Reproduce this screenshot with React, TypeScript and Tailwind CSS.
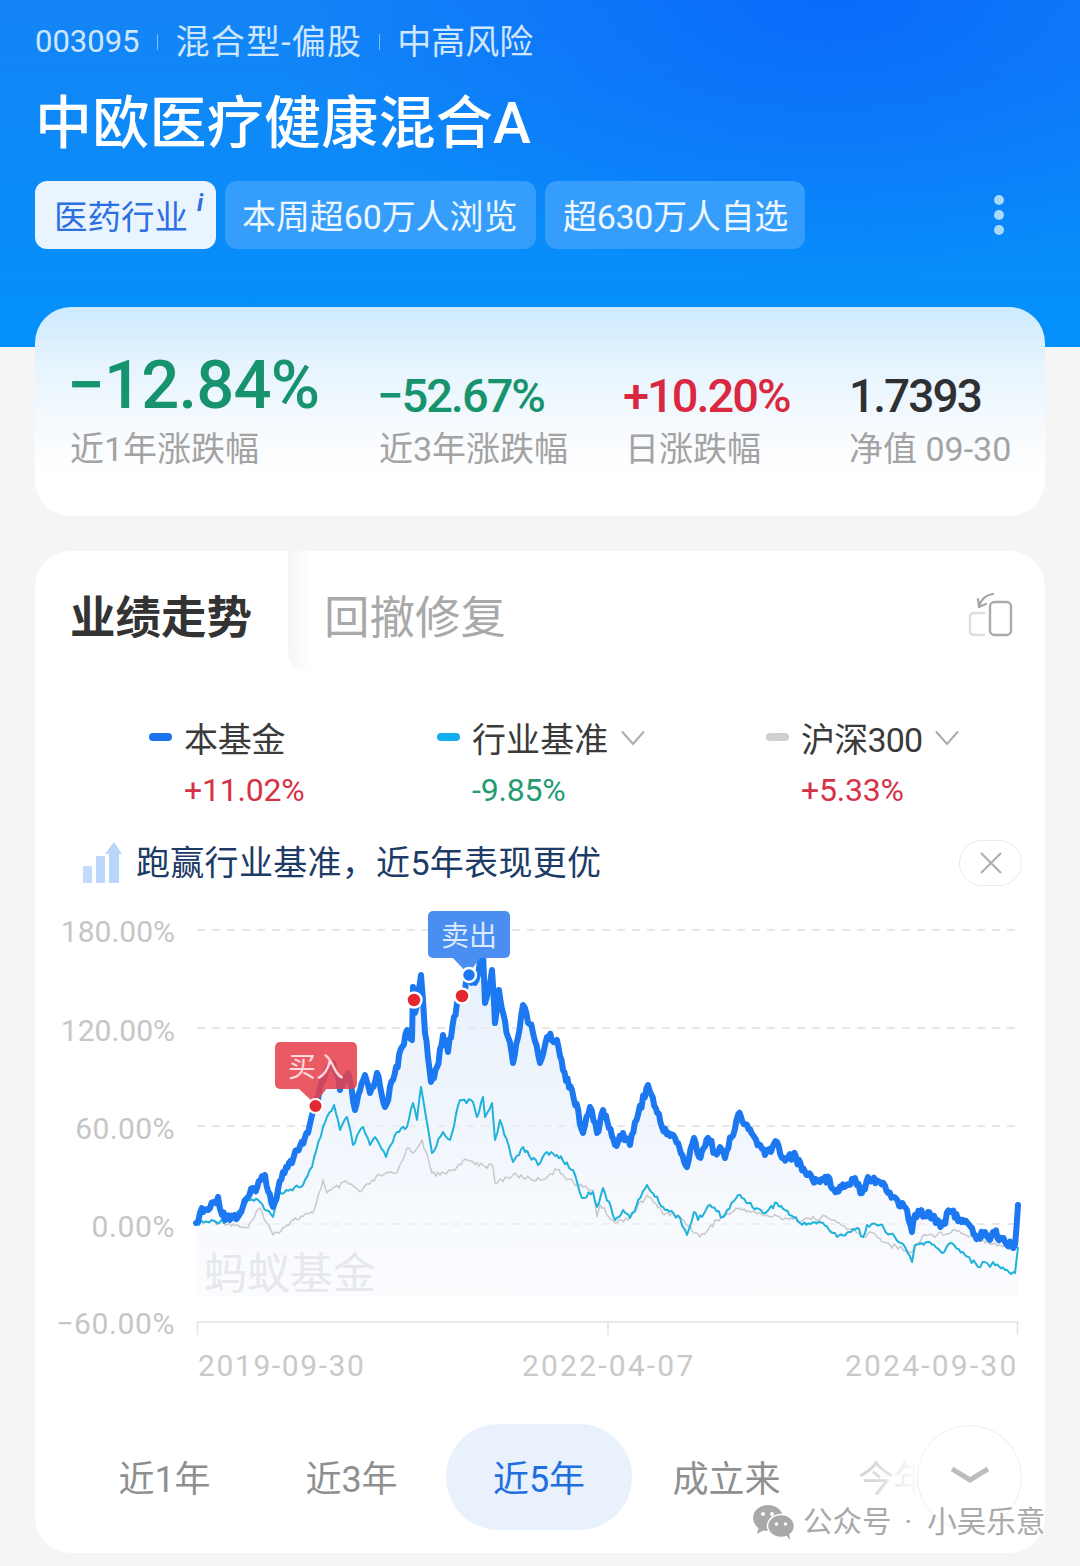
type Pt = [number, number];

const BLUE: Pt[] = [[196,1223],[200,1213],[210,1208],[218,1197],[222,1215],[238,1217],[248,1197],[265,1175],[273,1207],[283,1172],[292,1163],[297,1150],[308,1133],[315,1107],[327,1070],[333,1063],[340,1090],[348,1073],[355,1110],[365,1075],[370,1093],[377,1073],[385,1107],[393,1080],[407,1030],[412,1040],[413,987],[415,1013],[421,975],[425,1033],[431,1082],[437,1067],[443,1035],[448,1052],[457,1003],[463,997],[468,977],[475,983],[483,953],[485,1003],[492,970],[495,1023],[499,990],[508,1037],[513,1063],[523,1005],[533,1033],[540,1063],[547,1037],[557,1040],[563,1070],[572,1090],[583,1133],[590,1107],[597,1133],[603,1110],[615,1145],[623,1133],[630,1145],[635,1122],[648,1085],[662,1127],[675,1138],[687,1167],[694,1138],[699,1157],[708,1138],[715,1152],[720,1147],[725,1158],[738,1115],[753,1135],[765,1155],[777,1142],[782,1158],[793,1155],[808,1175],[820,1182],[825,1177],[837,1190],[855,1178],[862,1193],[868,1177],[880,1182],[893,1197],[907,1210],[912,1232],[915,1215],[928,1212],[942,1225],[950,1212],[963,1220],[978,1238],[985,1232],[990,1240],[993,1232],[1005,1242],[1015,1245],[1018,1205]];

const TEAL: Pt[] = [[197,1223],[230,1220],[250,1200],[260,1202],[273,1217],[280,1192],[303,1185],[312,1167],[323,1127],[327,1117],[334,1105],[340,1130],[347,1117],[353,1145],[363,1127],[370,1145],[375,1137],[386,1157],[397,1132],[407,1127],[413,1103],[417,1120],[421,1087],[432,1153],[443,1132],[450,1140],[460,1100],[473,1102],[477,1117],[483,1097],[485,1117],[492,1103],[495,1140],[500,1120],[513,1162],[523,1147],[538,1165],[547,1152],[557,1155],[573,1170],[582,1198],[593,1192],[597,1207],[603,1188],[615,1220],[623,1210],[630,1218],[647,1185],[663,1207],[680,1218],[687,1235],[694,1212],[698,1220],[710,1205],[723,1217],[738,1195],[763,1213],[777,1203],[800,1223],[823,1223],[837,1237],[857,1228],[863,1237],[867,1225],[880,1225],[905,1247],[912,1262],[915,1245],[928,1242],[942,1253],[950,1243],[963,1252],[978,1267],[985,1262],[990,1267],[993,1262],[1005,1270],[1015,1273],[1018,1247]];

const GREY: Pt[] = [[197,1222],[223,1222],[248,1228],[260,1208],[273,1235],[293,1220],[313,1213],[323,1180],[327,1193],[347,1182],[360,1192],[380,1175],[397,1173],[407,1148],[413,1153],[422,1140],[432,1173],[440,1175],[457,1167],[467,1160],[483,1165],[493,1167],[495,1183],[513,1175],[540,1180],[557,1170],[577,1185],[593,1190],[597,1217],[600,1205],[615,1223],[630,1217],[647,1195],[662,1212],[680,1217],[700,1237],[717,1220],[740,1208],[763,1215],[803,1220],[827,1217],[863,1237],[870,1232],[890,1245],[912,1252],[923,1235],[937,1235],[955,1230],[977,1238],[1015,1250],[1018,1240]];

// adds the small day-to-day wobble between the hand-read points
function wobble(points: Pt[], amp: number, step = 2): Pt[] {
  const out: Pt[] = [];
  let n = 0;
  points.forEach((p, i) => {
    out.push(p);
    const next = points[i + 1];
    if (!next) return;
    const steps = Math.floor((next[0] - p[0]) / step);
    for (let s = 1; s < steps; s++) {
      n += 1;
      const r = Math.sin(n * 12.9898) * 43758.5453;
      const j = (r - Math.floor(r) - 0.5) * amp;
      const t = s / steps;
      out.push([p[0] + (next[0] - p[0]) * t, p[1] + (next[1] - p[1]) * t + j]);
    }
  });
  return out;
}

const toLine = (pts: Pt[]) => pts.map((p) => `${p[0].toFixed(1)},${p[1].toFixed(1)}`).join(" ");

const blueLine = wobble(BLUE, 9, 1.5);
const areaPath = `M197,1296 L${blueLine.map((p) => `${p[0].toFixed(1)},${p[1].toFixed(1)}`).join(" L")} L1018,1296 Z`;

const GRID = [930, 1028, 1126, 1224];
const Y_LABELS: [string, number, number][] = [
  ["180.00%", 942, 0],
  ["120.00%", 1041, 0],
  ["60.00%", 1139, 0.4],
  ["0.00%", 1237, 0.6],
  ["−60.00%", 1334, 0.6],
];

function Chart() {
  return (
    <svg viewBox="35 900 1010 500" className="block w-[1010px] h-[500px]">
      <defs>
        <linearGradient id="area" x1="0" y1="950" x2="0" y2="1296" gradientUnits="userSpaceOnUse">
          <stop offset="0" stopColor="#e6f0fb" />
          <stop offset="0.6" stopColor="#f3f7fd" />
          <stop offset="1" stopColor="#fbfcfe" />
        </linearGradient>
      </defs>
      {GRID.map((y) => (
        <line key={y} x1="197" x2="1018" y1={y} y2={y} stroke="#e6e6e6" strokeWidth="1.5" strokeDasharray="8 7" />
      ))}
      <path d="M197.5,1335 V1322 H1017.5 V1335 M608,1322 V1335" fill="none" stroke="#e2e2e2" strokeWidth="1.5" />
      <path d={areaPath} fill="url(#area)" />
      {GRID.map((y) => (
        <line key={y} x1="197" x2="1018" y1={y} y2={y} stroke="#e2e2e2" strokeOpacity="0.6" strokeWidth="1.5" strokeDasharray="8 7" />
      ))}
      <text x="204" y="1289" fontSize="43" fill="#e6e8eb">蚂蚁基金</text>
      <polyline points={toLine(wobble(GREY, 5))} fill="none" stroke="#c9c9cc" strokeWidth="1.5" strokeLinejoin="round" />
      <polyline points={toLine(wobble(TEAL, 5))} fill="none" stroke="#1fb2da" strokeWidth="2" strokeLinejoin="round" />
      <polyline points={toLine(blueLine)} fill="none" stroke="#1b78f0" strokeWidth="6" strokeLinejoin="round" strokeLinecap="round" />

      {Y_LABELS.map(([label, y, spacing]) => (
        <text key={label} x="175" y={y} textAnchor="end" fontSize="30" letterSpacing={spacing} fill="#c6c6c6">{label}</text>
      ))}
      <text x="198" y="1376" fontSize="30" letterSpacing="1.6" fill="#c9c9c9">2019-09-30</text>
      <text x="522" y="1376" fontSize="30" letterSpacing="2.2" fill="#c9c9c9">2022-04-07</text>
      <text x="845" y="1376" fontSize="30" letterSpacing="2.2" fill="#c9c9c9">2024-09-30</text>

      <g opacity="0.86">
        <rect x="275" y="1042" width="82" height="47" rx="5" fill="#e73f4c" />
        <polygon points="298,1088 327,1088 315,1104" fill="#e73f4c" />
      </g>
      <text x="316" y="1077" textAnchor="middle" fontSize="28" fill="#ffd9dc">买入</text>
      <circle cx="315.5" cy="1106" r="7" fill="#e3262f" stroke="#fff" strokeWidth="2" />
      <circle cx="414" cy="1000" r="7.5" fill="#e3262f" stroke="#fff" strokeWidth="2.5" />
      <circle cx="462" cy="996" r="7.5" fill="#e3262f" stroke="#fff" strokeWidth="2.5" />

      <rect x="428" y="911" width="82" height="47" rx="5" fill="#4a8ef2" />
      <polygon points="452,957 481,957 468,974" fill="#4a8ef2" />
      <text x="469" y="946" textAnchor="middle" fontSize="28" fill="#dbe9fd">卖出</text>
      <circle cx="469" cy="975" r="7" fill="#1b78f0" stroke="#fff" strokeWidth="2.5" />
    </svg>
  );
}

function LegendItem({ width, mark, name, nameClass, value, valueColor, chevron }: { width: string; mark: string; name: string; nameClass: string; value: string; valueColor: string; chevron?: boolean }) {
  return (
    <div className={width}>
      <div className="flex items-center h-[46px]">
        <span className={`w-[23px] h-[8px] rounded-full mr-[12px] -mt-[6px] ${mark}`} />
        <span className={`text-[34px] leading-[46px] text-[#3a3a3a] ${nameClass}`}>{name}</span>
        {chevron && (
          <svg viewBox="0 0 24 16" className="ml-[13px] -mt-[4px] w-[24px] h-[16px]" fill="none" stroke="#ababab" strokeWidth="2">
            <path d="M1 1.5 L12 14 L23 1.5" />
          </svg>
        )}
      </div>
      <div className={`pl-[35px] mt-[7px] text-[32px] leading-[40px] tracking-[-0.2px] ${valueColor}`}>{value}</div>
    </div>
  );
}

function Stat({ width, value, size, color, label }: { width: string; value: string; size: string; color: string; label: string }) {
  return (
    <div className={width}>
      <div className={`h-[84px] flex items-end font-medium ${size} ${color}`}>{value}</div>
      <div className="mt-[4px] text-[34px] leading-[44px] text-[#a3a3a3] whitespace-nowrap">{label}</div>
    </div>
  );
}

const RANGES = ["近1年", "近3年", "近5年", "成立来", "今年来"];

export default function App() {
  return (
    <div className="relative w-[1080px] h-[1566px] overflow-hidden bg-[#f5f5f5] font-[Roboto,'Noto_Sans_CJK_SC',sans-serif]">
      <header className="h-[347px] pl-[35px] pt-[20px] bg-[radial-gradient(ellipse_560px_280px_at_830px_0px,#0a6bfb,transparent),linear-gradient(180deg,#1484f6,#0391fb)]">
        <div className="flex items-center h-[44px] text-[34px] leading-[44px] text-[#cfe6ff]">
          <span className="text-[31px]">003095</span>
          <span className="w-px h-[16px] bg-[#cfe6ff]/60 ml-[17px] mr-[18px]" />
          <span className="tracking-[1.2px]">混合型-偏股</span>
          <span className="w-px h-[16px] bg-[#cfe6ff]/60 ml-[17px] mr-[17px]" />
          <span>中高风险</span>
        </div>
        <h1 className="mt-[24px] text-[57px] leading-[72px] tracking-[0.25px] font-medium text-white">中欧医疗健康混合A</h1>
        <div className="flex items-center mt-[21px] h-[68px] pr-[76px]">
          <div className="relative w-[181px] h-[68px] pl-[19px] rounded-[12px] bg-[#eaf4fe] text-[33.5px] leading-[73px] text-[#2b6fe0]">
            医药行业
            <span className="absolute left-[162px] top-[8px] text-[24px] leading-[28px] font-bold italic text-[#2b6fe0]">i</span>
          </div>
          <div className="ml-[9px] h-[68px] w-[311px] px-[17px] rounded-[12px] bg-[#359dfc] text-[34px] leading-[73px] text-[#eef7ff] tracking-[-0.1px] whitespace-nowrap">本周超60万人浏览</div>
          <div className="ml-[9px] h-[68px] w-[260px] pl-[18px] rounded-[12px] bg-[#359dfc] text-[34px] leading-[73px] text-[#eef7ff] tracking-[-0.3px] whitespace-nowrap">超630万人自选</div>
          <div className="ml-auto flex flex-col gap-[5px]">
            <span className="w-[10px] h-[10px] rounded-full bg-[#a9d9fb]" />
            <span className="w-[10px] h-[10px] rounded-full bg-[#a9d9fb]" />
            <span className="w-[10px] h-[10px] rounded-full bg-[#a9d9fb]" />
          </div>
        </div>
      </header>

      <section className="relative mx-[35px] -mt-[40px] h-[209px] pt-[32px] pl-[35px] flex rounded-[36px] bg-[linear-gradient(180deg,#cdeafe_0%,#e6f4fe_28%,#f8fbfe_62%,#ffffff_80%)]">
        <Stat width="w-[309px]" value="−12.84%" size="text-[67px] leading-[76px] tracking-[-0.8px] -ml-[3px]" color="text-[#17936d]" label="近1年涨跌幅" />
        <Stat width="w-[246px]" value="−52.67%" size="text-[47px] leading-[54px] tracking-[-2px] -ml-[2px]" color="text-[#17936d]" label="近3年涨跌幅" />
        <Stat width="w-[224px]" value="+10.20%" size="text-[47px] leading-[54px] tracking-[-2px] -ml-[2px]" color="text-[#d9283f]" label="日涨跌幅" />
        <Stat width="w-[180px]" value="1.7393" size="text-[46px] leading-[54px] tracking-[-1.9px]" color="text-[#2e3033]" label="净值 09-30" />
      </section>

      <section className="relative mx-[35px] mt-[35px] h-[1002px] rounded-[36px] bg-white">
        <div className="flex items-start h-[130px] mb-[36px]">
          <div className="w-[253px] h-[130px] pl-[35px] pt-[39px] text-[45.5px] leading-[58px] font-semibold text-[#333]">业绩走势</div>
          <div className="w-[26px] h-[120px] rounded-bl-[18px] bg-[linear-gradient(90deg,#f6f6f6,#ffffff)]" />
          <div className="ml-[10px] pt-[39px] text-[45.5px] leading-[58px] text-[#a9a9a9]">回撤修复</div>
          <svg viewBox="965 588 52 52" className="ml-auto mr-[29px] mt-[37px] w-[52px] h-[52px]" fill="none" strokeLinecap="round">
            <rect x="991" y="602" width="21" height="33" rx="4.5" stroke="#ababab" strokeWidth="2.4" />
            <path d="M985 613 H975 Q971 613 971 617 V631 Q971 635 975 635 H985" stroke="#dedede" strokeWidth="2.4" />
            <path d="M994 594 Q984 595 980 606 M979 599 L980 607 L987 604" stroke="#a5a5a5" strokeWidth="2.2" />
          </svg>
        </div>

        <div className="flex pl-[114px]">
          <LegendItem width="w-[288px]" mark="bg-[#1b72ec]" name="本基金" nameClass="tracking-[-0.2px]" value="+11.02%" valueColor="text-[#d63245]" />
          <LegendItem width="w-[329px]" mark="bg-[#12aef0]" name="行业基准" nameClass="tracking-[0.1px]" value="-9.85%" valueColor="text-[#259a73]" chevron />
          <LegendItem width="w-[240px]" mark="bg-[#cfcfcf]" name="沪深300" nameClass="tracking-[-0.8px]" value="+5.33%" valueColor="text-[#d63245]" chevron />
        </div>

        <div className="flex items-center h-[46px] mt-[30px] pl-[47px] pr-[23px]">
          <svg viewBox="0 0 40 42" className="w-[40px] h-[42px] mr-[14px]">
            <rect x="1" y="24" width="9" height="17" rx="1" fill="#c3dafa" />
            <rect x="14" y="14" width="9" height="27" rx="1" fill="#bcd7fa" />
            <path d="M27 41 V12 H23 L32 0 L40 12 H37 V41 Z" fill="#b8d6fb" />
          </svg>
          <span className="text-[34px] leading-[46px] tracking-[0.3px] text-[#1d3b66]">跑赢行业基准，近5年表现更优</span>
          <div className="ml-auto w-[63px] h-[46px] rounded-full border border-[#ebebeb] flex items-center justify-center">
            <svg viewBox="0 0 24 24" className="w-[24px] h-[24px]" stroke="#b0b0b0" strokeWidth="2.2" fill="none">
              <path d="M2 2 L22 22 M22 2 L2 22" />
            </svg>
          </div>
        </div>

        <div className="mt-[14px]">
          <Chart />
        </div>

        <div className="relative flex mt-[24px] pl-[36px] h-[106px]">
          {RANGES.map((r, i) => (
            <div
              key={r}
              className={
                i === 2
                  ? "w-[186px] h-[106px] mx-[1px] rounded-full bg-[#e8f1fc] text-center text-[36px] leading-[113px] text-[#1f6fe0]"
                  : i === 4
                    ? "w-[108px] ml-[38px] text-center text-[36px] leading-[113px] whitespace-nowrap text-[#d6d6d6]"
                    : "w-[187px] text-center text-[36px] leading-[113px] text-[#8f8f8f]"
              }
            >
              {r}
            </div>
          ))}
          <div className="absolute left-[836px] top-0 w-[50px] h-[106px] bg-[linear-gradient(90deg,#ffffff00,#ffffff)]" />
          <div className="absolute left-[882px] top-[1px] w-[105px] h-[105px] rounded-full bg-white border border-[#eeeeee] flex items-center justify-center">
            <svg viewBox="0 0 38 20" className="w-[38px] h-[20px] -mt-[4px]" fill="none" stroke="#bdbdbd" strokeWidth="5">
              <path d="M1 3 L19 14 L37 3" />
            </svg>
          </div>
        </div>
      </section>

      <div className="absolute left-[753px] top-[1503px] flex items-center">
        <svg viewBox="0 0 42 36" className="w-[42px] h-[36px]">
          <ellipse cx="15" cy="14" rx="15" ry="13" fill="#a9a9a9" />
          <path d="M6 22 L4 30 L13 25 Z" fill="#a9a9a9" />
          <ellipse cx="28" cy="22" rx="13.5" ry="11.5" stroke="#fff" strokeWidth="1.5" fill="#a9a9a9" />
          <path d="M33 31 L37 36 L36 28 Z" fill="#a9a9a9" />
          <circle cx="10" cy="10" r="2" fill="#fff" />
          <circle cx="19" cy="10" r="2" fill="#fff" />
          <circle cx="23.5" cy="20" r="1.7" fill="#fff" />
          <circle cx="32.5" cy="20" r="1.7" fill="#fff" />
        </svg>
        <span className="ml-[8px] text-[29.5px] leading-[38px] text-[#a9a9a9] whitespace-nowrap">公众号</span>
        <span className="ml-[13px] text-[29.5px] leading-[38px] text-[#a9a9a9]">·</span>
        <span className="ml-[15px] text-[29.5px] leading-[38px] text-[#a9a9a9] whitespace-nowrap">小吴乐意</span>
      </div>
    </div>
  );
}
